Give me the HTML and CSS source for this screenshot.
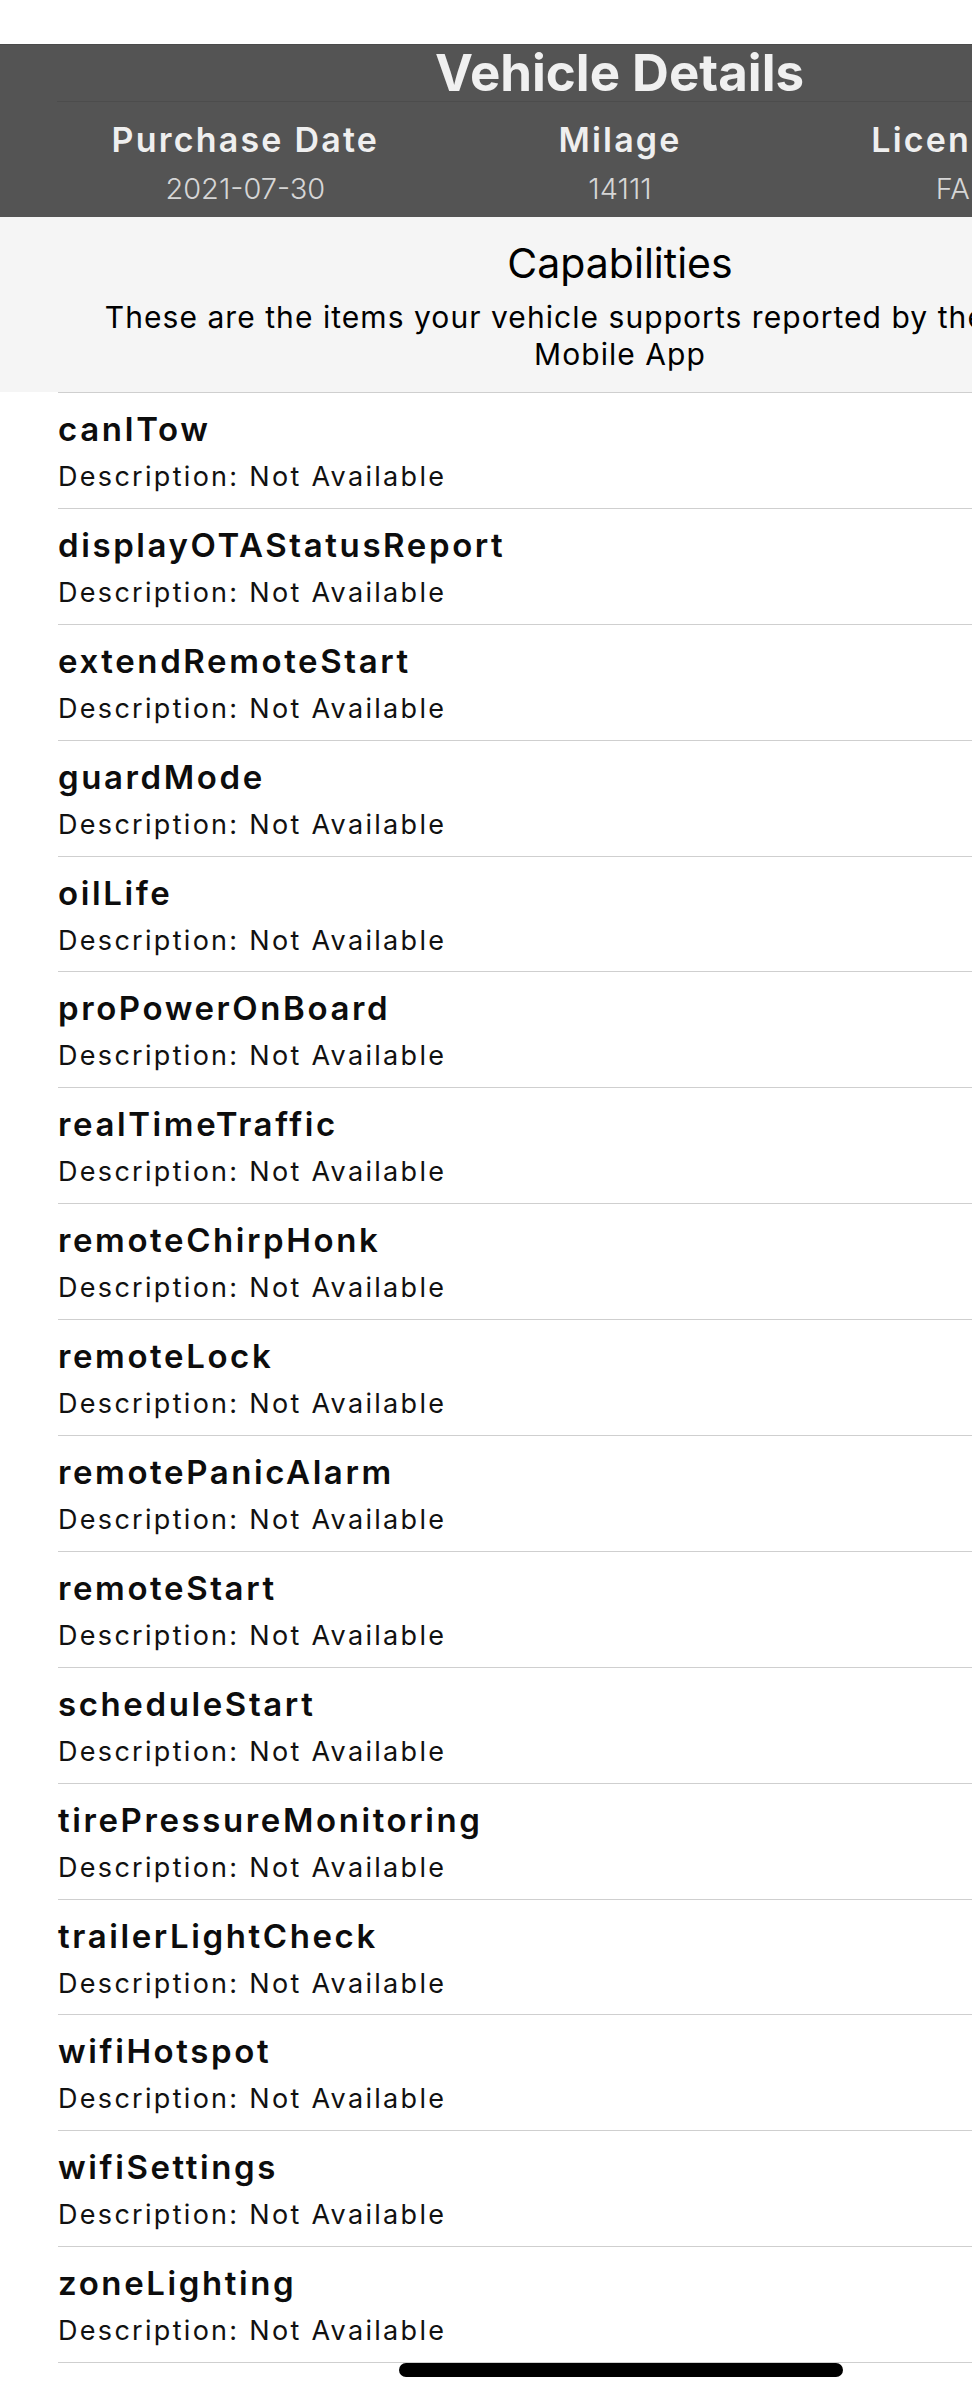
FILE: index.html
```html
<!DOCTYPE html>
<html lang="en">
<head>
    <meta charset="UTF-8">
    <meta name="viewport" content="width=device-width, initial-scale=1.0">
    <title>Vehicle Details</title>
    <link rel="stylesheet" href="styles.css">
</head>
<body>
    <div class="page">
        <div class="status-space"></div>
        <div class="vehicle-header">
            <div class="vehicle-title">Vehicle Details</div>
            <div class="detail-row">
                <div class="detail">
                    <div class="detail-label">Purchase Date</div>
                    <div class="detail-value">2021-07-30</div>
                </div>
                <div class="detail">
                    <div class="detail-label">Milage</div>
                    <div class="detail-value">14111</div>
                </div>
                <div class="detail">
                    <div class="detail-label">License Plate</div>
                    <div class="detail-value">FAK1234</div>
                </div>
            </div>
        </div>
        <div class="capabilities">
            <div class="capabilities-title">Capabilities</div>
            <div class="capabilities-text">These are the items your vehicle supports reported by the FordPass Mobile App</div>
        </div>
        <div class="capability-list">
            <div class="capability">
                <div class="capability-name">canITow</div>
                <div class="capability-desc">Description: Not Available</div>
            </div>
            <div class="capability">
                <div class="capability-name">displayOTAStatusReport</div>
                <div class="capability-desc">Description: Not Available</div>
            </div>
            <div class="capability">
                <div class="capability-name">extendRemoteStart</div>
                <div class="capability-desc">Description: Not Available</div>
            </div>
            <div class="capability">
                <div class="capability-name">guardMode</div>
                <div class="capability-desc">Description: Not Available</div>
            </div>
            <div class="capability">
                <div class="capability-name">oilLife</div>
                <div class="capability-desc">Description: Not Available</div>
            </div>
            <div class="capability">
                <div class="capability-name">proPowerOnBoard</div>
                <div class="capability-desc">Description: Not Available</div>
            </div>
            <div class="capability">
                <div class="capability-name">realTimeTraffic</div>
                <div class="capability-desc">Description: Not Available</div>
            </div>
            <div class="capability">
                <div class="capability-name">remoteChirpHonk</div>
                <div class="capability-desc">Description: Not Available</div>
            </div>
            <div class="capability">
                <div class="capability-name">remoteLock</div>
                <div class="capability-desc">Description: Not Available</div>
            </div>
            <div class="capability">
                <div class="capability-name">remotePanicAlarm</div>
                <div class="capability-desc">Description: Not Available</div>
            </div>
            <div class="capability">
                <div class="capability-name">remoteStart</div>
                <div class="capability-desc">Description: Not Available</div>
            </div>
            <div class="capability">
                <div class="capability-name">scheduleStart</div>
                <div class="capability-desc">Description: Not Available</div>
            </div>
            <div class="capability">
                <div class="capability-name">tirePressureMonitoring</div>
                <div class="capability-desc">Description: Not Available</div>
            </div>
            <div class="capability">
                <div class="capability-name">trailerLightCheck</div>
                <div class="capability-desc">Description: Not Available</div>
            </div>
            <div class="capability">
                <div class="capability-name">wifiHotspot</div>
                <div class="capability-desc">Description: Not Available</div>
            </div>
            <div class="capability">
                <div class="capability-name">wifiSettings</div>
                <div class="capability-desc">Description: Not Available</div>
            </div>
            <div class="capability">
                <div class="capability-name">zoneLighting</div>
                <div class="capability-desc">Description: Not Available</div>
            </div>
        </div>
    </div>
    <div class="home-indicator"></div>
</body>
</html>
```

FILE: styles.css
```css
html, body {
    overflow: hidden;
}
body {
    font-family: Inter, "Liberation Sans", sans-serif;
    margin: 0;
    padding: 0;
    background-color: white;
    color: #111;
}
.page {
    width: 1240px;
}
.status-space {
    height: 44px;
}
.vehicle-header {
    background-color: #545454;
    border-top: 1px solid #4a4a4a;
    color: #f0f0f0;
}
.vehicle-title {
    font-size: 51px;
    font-weight: 700;
    line-height: 56px;
    text-align: center;
    margin: 0 58px 0 57px;
    border-bottom: 1px solid #4c4c4c;
}
.detail-row {
    display: flex;
    padding: 17px 58px 10px 58px;
}
.detail {
    flex: 1;
    text-align: center;
}
.detail-label {
    font-size: 34px;
    font-weight: 600;
    line-height: 42px;
    letter-spacing: 2.2px;
    color: #efefef;
}
.detail-value {
    font-size: 29px;
    font-weight: 300;
    line-height: 36px;
    margin-top: 10px;
    color: #d6d6d6;
}
.capabilities {
    background-color: #f5f5f5;
    padding: 21px 80px 19px 80px;
    text-align: center;
    color: #000;
}
.capabilities-title {
    font-size: 41px;
    line-height: 50px;
}
.capabilities-text {
    font-size: 30px;
    line-height: 37px;
    letter-spacing: 1.05px;
    margin-top: 11px;
}
.capability-list {
    margin-left: 58px;
    border-top: 1px solid #cfcfcf;
}
.capability {
    padding: 16px 0 13.9px 0;
    border-bottom: 1px solid #cfcfcf;
}
.capability-name {
    font-size: 33px;
    font-weight: 600;
    line-height: 40px;
    letter-spacing: 2.6px;
    color: #0d0d0d;
}
.capability-desc {
    font-size: 27px;
    line-height: 34px;
    letter-spacing: 2.3px;
    margin-top: 11px;
    color: #111;
}
.home-indicator {
    position: fixed;
    left: 399px;
    bottom: 23px;
    width: 444px;
    height: 14px;
    border-radius: 7px;
    background-color: black;
}
```
